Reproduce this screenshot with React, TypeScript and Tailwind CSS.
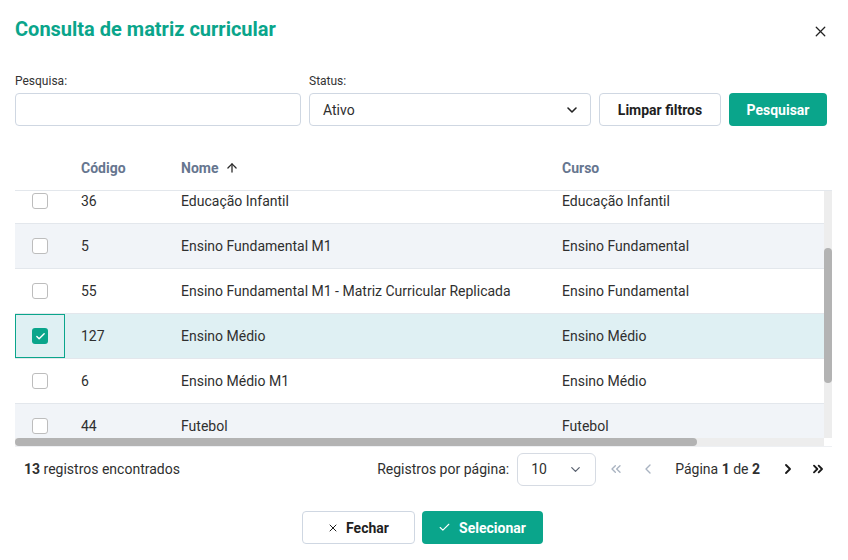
import { useEffect, useRef } from 'react'
import { ArrowUp, Check, ChevronDown, ChevronLeft, ChevronRight, ChevronsLeft, ChevronsRight, X } from 'lucide-react'

type Row = { id: number; nome: string; curso: string }

const rows: Row[] = [
  { id: 12, nome: 'Anos Iniciais', curso: 'Ensino Fundamental' },
  { id: 21, nome: 'Berçário', curso: 'Educação Infantil' },
  { id: 36, nome: 'Educação Infantil', curso: 'Educação Infantil' },
  { id: 5, nome: 'Ensino Fundamental M1', curso: 'Ensino Fundamental' },
  { id: 55, nome: 'Ensino Fundamental M1 - Matriz Curricular Replicada', curso: 'Ensino Fundamental' },
  { id: 127, nome: 'Ensino Médio', curso: 'Ensino Médio' },
  { id: 6, nome: 'Ensino Médio M1', curso: 'Ensino Médio' },
  { id: 44, nome: 'Futebol', curso: 'Futebol' },
  { id: 18, nome: 'Infantil M2', curso: 'Educação Infantil' },
  { id: 73, nome: 'Médio Técnico', curso: 'Ensino Médio' },
]

const selectedId = 127

function Checkbox({ checked }: { checked?: boolean }) {
  if (checked) {
    return (
      <span className="w-4 h-4 rounded-[3px] bg-[#0aa58b] flex items-center justify-center">
        <Check size={11} strokeWidth={3} className="text-white" />
      </span>
    )
  }
  return <span className="w-4 h-4 rounded-[3px] border border-[#bdbdbd] bg-white" />
}

export default function App() {
  const bodyRef = useRef<HTMLDivElement>(null)

  useEffect(() => {
    if (bodyRef.current) bodyRef.current.scrollTop = 102
  }, [])

  return (
    <div className="w-[848px] h-[560px] bg-white text-[#2f2f2f] font-['Roboto',sans-serif] pl-[15px] pr-[16px] pt-[15px] overflow-hidden">
      <div className="flex items-center justify-between h-7">
        <h1 className="text-[20px] font-bold text-[#0aa58b] leading-7">Consulta de matriz curricular</h1>
        <button className="mt-[5px] mr-[3px] text-[#222]">
          <X size={17} strokeWidth={1.8} />
        </button>
      </div>

      <div className="flex items-end gap-2 mt-[30px]">
        <div className="w-[286px]">
          <label className="block text-[12px] leading-4 mb-1 text-[#333]">Pesquisa:</label>
          <input className="w-full h-[33px] rounded border border-[#cfd7e2] px-3 text-sm outline-none" />
        </div>
        <div className="w-[282px]">
          <label className="block text-[12px] leading-4 mb-1 text-[#333]">Status:</label>
          <div className="h-[33px] rounded border border-[#cfd7e2] pl-[13px] pr-[10px] flex items-center justify-between text-sm">
            <span>Ativo</span>
            <ChevronDown size={16} strokeWidth={2.4} className="text-[#222]" />
          </div>
        </div>
        <button className="w-[122px] h-[33px] rounded border border-[#cfd7e2] text-sm font-bold text-[#1f1f1f]">
          Limpar filtros
        </button>
        <button className="w-[98px] h-[33px] rounded bg-[#0aa58b] text-sm font-bold text-white">Pesquisar</button>
      </div>

      <div className="mt-5 w-[817px]">
        <div className="h-[45px] border-b border-[#e3e7ec] overflow-hidden">
          <div className="w-[960px] h-full grid grid-cols-[50px_100px_381px_1fr] items-center text-sm font-bold text-[#66768f]">
            <div />
            <div className="pl-4">Código</div>
            <div className="pl-4 flex items-center gap-[7px]">
              Nome
              <ArrowUp size={14} strokeWidth={2.2} className="text-[#2a2a2a]" />
            </div>
            <div className="pl-4">Curso</div>
          </div>
        </div>

        <div className="h-[256px] flex flex-col border-b border-[#eef0f3]">
          <div className="flex flex-1 min-h-0">
            <div ref={bodyRef} className="w-[809px] h-full overflow-hidden">
              <div className="w-[960px]">
                {rows.map((r, i) => {
                  const selected = r.id === selectedId
                  const bg = selected ? 'bg-[#dff0f3]' : i % 2 === 1 ? 'bg-[#f1f4f8]' : 'bg-white'
                  return (
                    <div
                      key={r.id}
                      className={`${bg} h-[45px] border-b border-[#e3e7ec] grid grid-cols-[50px_100px_381px_1fr] items-center text-sm`}
                    >
                      <div
                        className={`h-full flex items-center justify-center ${selected ? 'border border-[#0aa58b]' : ''}`}
                      >
                        <Checkbox checked={selected} />
                      </div>
                      <div className="pl-4">{r.id}</div>
                      <div className="pl-4 whitespace-nowrap">{r.nome}</div>
                      <div className="pl-4 whitespace-nowrap">{r.curso}</div>
                    </div>
                  )
                })}
              </div>
            </div>
            <div className="w-2 h-full bg-[#ededed]">
              <div className="mt-[57px] h-[135px] rounded-full bg-[#b3b3b3]" />
            </div>
          </div>
          <div className="flex h-2">
            <div className="w-[809px] h-full bg-[#ededed]">
              <div className="w-[682px] h-full rounded-full bg-[#b3b3b3]" />
            </div>
            <div className="w-2 h-full bg-white" />
          </div>
        </div>

        <div className="flex items-center justify-between h-[34px] mt-[5px] pl-[9px] text-sm">
          <div>
            <span className="font-bold">13</span> registros encontrados
          </div>
          <div className="flex items-center">
            <span>Registros por página:</span>
            <div className="ml-2 w-[79px] h-[33px] rounded-md border border-[#d6dbe3] pl-[13px] pr-[12px] flex items-center justify-between">
              <span>10</span>
              <ChevronDown size={15} strokeWidth={2} className="text-[#5a6270]" />
            </div>
            <ChevronsLeft size={16} strokeWidth={2} className="ml-[12px] text-[#a9b3c1]" />
            <ChevronLeft size={16} strokeWidth={2} className="ml-[16px] text-[#a9b3c1]" />
            <span className="ml-[19px]">
              Página <span className="font-bold">1</span> de <span className="font-bold">2</span>
            </span>
            <ChevronRight size={16} strokeWidth={2.8} className="ml-[20px] text-[#1a1a1a]" />
            <ChevronsRight size={16} strokeWidth={2.8} className="ml-[14px] mr-[6px] text-[#1a1a1a]" />
          </div>
        </div>
      </div>

      <div className="flex justify-center gap-[7px] mt-[25px] pr-[3px]">
        <button className="w-[113px] h-[33px] rounded border border-[#cfd7e2] flex items-center justify-center gap-[7px] text-sm font-bold text-[#1f1f1f]">
          <X size={12} strokeWidth={2} />
          Fechar
        </button>
        <button className="w-[121px] h-[33px] rounded bg-[#0aa58b] flex items-center justify-center gap-[8px] text-sm font-bold text-white">
          <Check size={13} strokeWidth={2} />
          Selecionar
        </button>
      </div>
    </div>
  )
}
